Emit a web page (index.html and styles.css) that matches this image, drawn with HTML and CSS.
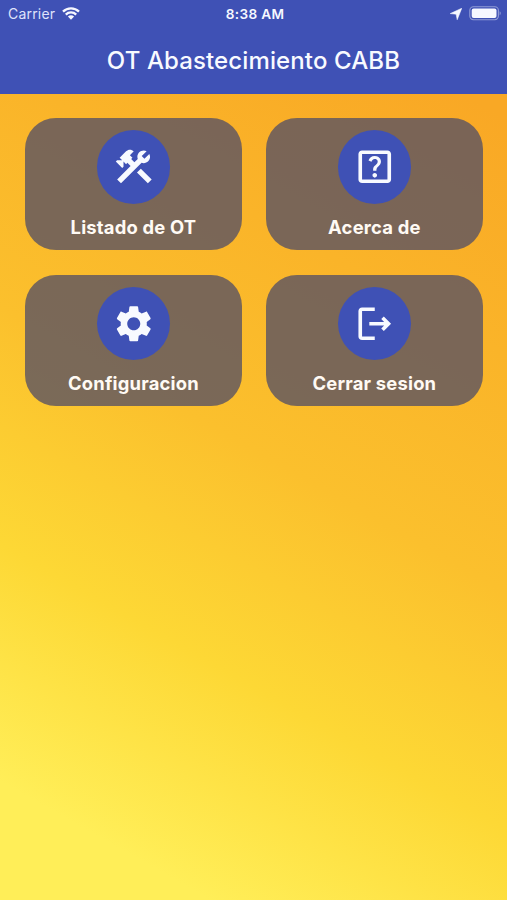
FILE: index.html
```html
<!DOCTYPE html>
<html lang="es">
<head>
<meta charset="utf-8">
<title>OT Abastecimiento CABB</title>
<link rel="stylesheet" href="styles.css">
</head>
<body>
<header class="app-bar">
  <div class="status">
    <div class="status-left">
      <span class="carrier">Carrier</span>
      <svg class="wifi" viewBox="0 0 18 13" width="18" height="13"><path d="M1 4.6a11.4 11.4 0 0 1 16 0M3.8 7.6a7.4 7.4 0 0 1 10.4 0" fill="none" stroke="currentColor" stroke-width="2.3"/><path d="M5.9 9.6a4.5 4.5 0 0 1 6.2 0L9 12.8z" fill="currentColor"/></svg>
    </div>
    <span class="clock">8:38 AM</span>
    <div class="status-right">
      <svg viewBox="0 0 12 12" width="12" height="12"><path d="M11.8.2 7.2 11.8 6.1 6.2.2 5.6z" fill="currentColor" stroke="currentColor" stroke-width=".5" stroke-linejoin="round"/></svg>
      <svg viewBox="0 0 33 15" width="33" height="15"><rect x=".8" y=".8" width="28.6" height="12.9" rx="3.6" fill="none" stroke="currentColor" stroke-opacity=".45" stroke-width="1.1"/><rect x="2.7" y="2.6" width="24.8" height="9.3" rx="2" fill="currentColor"/><path d="M30.7 5.2c1.3.6 1.3 3.5 0 4.1z" fill="currentColor" fill-opacity=".5"/></svg>
    </div>
  </div>
  <h1 class="title">OT Abastecimiento CABB</h1>
</header>
<main class="menu">
  <a class="card">
    <span class="badge"><svg class="icon" viewBox="0 0 24 24"><path d="m13.783 15.172 2.121-2.121 5.996 5.996-2.121 2.121zM17.5 10c1.93 0 3.5-1.57 3.5-3.5 0-.58-.16-1.12-.41-1.6l-2.7 2.7-1.49-1.49 2.7-2.7c-.48-.25-1.02-.41-1.6-.41C15.57 3 14 4.57 14 6.5c0 .41.08.8.21 1.16l-1.85 1.85-1.78-1.78.71-.71-1.41-1.41L12 3.49c-1.17-1.17-3.07-1.17-4.24 0L4.22 7.03l1.41 1.41H2.81L2.1 9.15l3.54 3.54.71-.71V9.15l1.41 1.41.71-.71 1.78 1.78-7.41 7.41 2.12 2.12L16.34 9.79c.36.13.75.21 1.16.21z"/></svg></span>
    <span class="label">Listado de OT</span>
  </a>
  <a class="card">
    <span class="badge"><svg class="icon" viewBox="0 0 24 24"><path d="M19 3H5c-1.1 0-2 .9-2 2v14c0 1.1.9 2 2 2h14c1.1 0 2-.9 2-2V5c0-1.1-.9-2-2-2zm0 16H5V5h14v14z"/><path d="M12.01 18c-.7 0-1.26-.56-1.26-1.26 0-.71.56-1.25 1.26-1.25.71 0 1.25.54 1.25 1.25-.01.69-.54 1.26-1.25 1.26zm3.01-7.4c-.76 1.11-1.48 1.46-1.87 2.17-.16.29-.22.48-.22 1.41h-1.82c0-.49-.08-1.29.31-1.98.49-.87 1.42-1.39 1.96-2.16.57-.81.25-2.33-1.37-2.33-1.06 0-1.58.8-1.8 1.48l-1.65-.7C9.01 7.15 10.22 6 11.99 6c1.48 0 2.49.67 3.01 1.52.44.72.7 2.07.02 3.08z"/></svg></span>
    <span class="label">Acerca de</span>
  </a>
  <a class="card">
    <span class="badge"><svg class="icon" viewBox="0 0 24 24"><path d="M19.14 12.94c.04-.3.06-.61.06-.94 0-.32-.02-.64-.07-.94l2.03-1.58c.18-.14.23-.41.12-.61l-1.92-3.32c-.12-.22-.37-.29-.59-.22l-2.39.96c-.5-.38-1.03-.7-1.62-.94l-.36-2.54c-.04-.24-.24-.41-.48-.41h-3.84c-.24 0-.43.17-.47.41l-.36 2.54c-.59.24-1.13.57-1.62.94l-2.39-.96c-.22-.08-.47 0-.59.22L2.74 8.87c-.12.21-.08.47.12.61l2.03 1.58c-.05.3-.09.63-.09.94s.02.64.07.94l-2.03 1.58c-.18.14-.23.41-.12.61l1.92 3.32c.12.22.37.29.59.22l2.39-.96c.5.38 1.03.7 1.62.94l.36 2.54c.05.24.24.41.48.41h3.84c.24 0 .44-.17.47-.41l.36-2.54c.59-.24 1.13-.56 1.62-.94l2.39.96c.22.08.47 0 .59-.22l1.92-3.32c.12-.22.07-.47-.12-.61l-2.01-1.58zM12 15.6c-1.98 0-3.6-1.62-3.6-3.6s1.62-3.6 3.6-3.6 3.6 1.62 3.6 3.6-1.62 3.6-3.6 3.6z"/></svg></span>
    <span class="label">Configuracion</span>
  </a>
  <a class="card">
    <span class="badge"><svg class="icon" viewBox="0 0 24 24"><path d="m17 8-1.41 1.41L17.17 11H9v2h8.17l-1.58 1.58L17 16l4-4-4-4zM5 5h7V3H5c-1.1 0-2 .9-2 2v14c0 1.1.9 2 2 2h7v-2H5V5z"/></svg></span>
    <span class="label">Cerrar sesion</span>
  </a>
</main>
</body>
</html>
```
FILE: styles.css
```css
* { box-sizing: border-box; }
body {
  margin: 0;
  height: 900px;
  display: flex;
  flex-direction: column;
  font-family: Inter, "Liberation Sans", sans-serif;
  color: #fff;
  overflow: hidden;
  background: linear-gradient(209.39deg, #f9a825 10%, #fbc02d 50%, #fdd835 70%, #ffee58 90%);
}
.app-bar {
  height: 93.5px;
  background: #3f51b5;
  flex: none;
}
.status {
  height: 27px;
  padding: 0 5px 0 8px;
  display: grid;
  grid-template-columns: 1fr auto 1fr;
  align-items: center;
  font-size: 13.6px;
  color: #f6f8ff;
}
.status-left, .status-right {
  display: flex;
  align-items: center;
}
.status-left { gap: 7px; }
.carrier { font-size: 14px; letter-spacing: .2px; color: #dfe3fb; }
.clock { font-weight: 600; letter-spacing: .35px; }
.status-right { justify-content: flex-end; gap: 7px; }
.title {
  margin: 0;
  height: 66px;
  line-height: 67px;
  text-align: center;
  font-size: 24px;
  font-weight: 500;
  letter-spacing: .12px;
  color: #f8faff;
}
.menu {
  flex: 1;
  padding: 24.7px 24.5px 0 25.3px;
  display: grid;
  grid-template-columns: 1fr 1fr;
  grid-auto-rows: 131.7px;
  align-content: start;
  gap: 24.7px;
}
.card {
  border-radius: 31px;
  background: rgba(90, 83, 99, .8);
  padding-top: 12px;
  display: flex;
  flex-direction: column;
  align-items: center;
}
.badge {
  width: 73.5px;
  height: 73.5px;
  border-radius: 50%;
  background: #3f51b5;
  display: flex;
  align-items: center;
  justify-content: center;
}
.icon { width: 43.5px; height: 43.5px; fill: #f8faff; }
.label {
  margin-top: 11px;
  font-size: 18.4px;
  line-height: 24px;
  font-weight: 700;
  letter-spacing: .2px;
  color: #fffaf4;
}
```
